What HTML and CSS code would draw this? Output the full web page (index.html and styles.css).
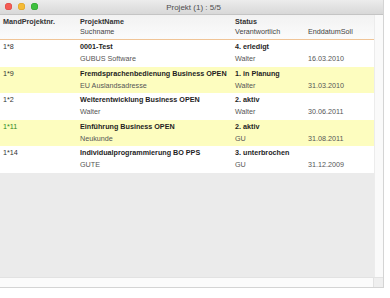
FILE: index.html
```html
<!DOCTYPE html>
<html lang="de">
<head>
    <meta charset="UTF-8">
    <title>Projekt (1) : 5/5</title>
    <link rel="stylesheet" href="styles.css">
</head>
<body>
    <div class="window">
        <div class="titlebar">
            <div class="lights">
                <span class="light red"></span>
                <span class="light yellow"></span>
                <span class="light green"></span>
            </div>
            <div class="title">Projekt (1) : 5/5</div>
        </div>

        <div class="main">
            <div class="table">
                <div class="row head">
                    <div class="cell"><b>MandProjektnr.</b></div>
                    <div class="cell"><b>ProjektName</b><span>Suchname</span></div>
                    <div class="cell"><b>Status</b><span>Verantwortlich</span></div>
                    <div class="cell"><b>&nbsp;</b><span>EnddatumSoll</span></div>
                </div>

                <div class="row">
                    <div class="cell nr">1*8</div>
                    <div class="cell"><b>0001-Test</b><span>GUBUS Software</span></div>
                    <div class="cell"><b>4. erledigt</b><span>Walter</span></div>
                    <div class="cell"><b>&nbsp;</b><span>16.03.2010</span></div>
                </div>
                <div class="row marked">
                    <div class="cell nr">1*9</div>
                    <div class="cell"><b>Fremdsprachenbedienung Business OPEN</b><span>EU Auslandsadresse</span></div>
                    <div class="cell"><b>1. in Planung</b><span>Walter</span></div>
                    <div class="cell"><b>&nbsp;</b><span>31.03.2010</span></div>
                </div>
                <div class="row">
                    <div class="cell nr">1*2</div>
                    <div class="cell"><b>Weiterentwicklung Business OPEN</b><span>Walter</span></div>
                    <div class="cell"><b>2. aktiv</b><span>Walter</span></div>
                    <div class="cell"><b>&nbsp;</b><span>30.06.2011</span></div>
                </div>
                <div class="row marked">
                    <div class="cell nr active">1*11</div>
                    <div class="cell"><b>Einführung Business OPEN</b><span>Neukunde</span></div>
                    <div class="cell"><b>2. aktiv</b><span>GU</span></div>
                    <div class="cell"><b>&nbsp;</b><span>31.08.2011</span></div>
                </div>
                <div class="row">
                    <div class="cell nr">1*14</div>
                    <div class="cell"><b>Individualprogrammierung BO PPS</b><span>GUTE</span></div>
                    <div class="cell"><b>3. unterbrochen</b><span>GU</span></div>
                    <div class="cell"><b>&nbsp;</b><span>31.12.2009</span></div>
                </div>

                <div class="empty"></div>
            </div>
            <div class="vscroll"></div>
        </div>

        <div class="hscroll">
            <div class="track"></div>
            <div class="corner"></div>
        </div>
    </div>
</body>
</html>
```

FILE: styles.css
```css
body {
    margin: 0;
    background-color: white;
    font-family: "Liberation Sans", Arial, sans-serif;
    color: #222;
}
.window {
    width: 383px;
    height: 287px;
    border-right: 1px solid #d4d4d4;
    border-bottom: 1px solid #d4d4d4;
    display: flex;
    flex-direction: column;
    background-color: #fafafa;
}
.titlebar {
    height: 15px;
    flex: none;
    position: relative;
    background: linear-gradient(#ececec, #d8d8d8);
    border-bottom: 1px solid #c4c4c4;
    box-sizing: border-box;
    display: flex;
    align-items: center;
    justify-content: center;
}
.lights {
    position: absolute;
    left: 5px;
    top: 3px;
    display: flex;
    gap: 6px;
}
.light {
    width: 7px;
    height: 7px;
    border-radius: 50%;
}
.red {
    background-color: #f45c55;
    box-shadow: inset 0 0 0 0.5px #d8443e;
}
.yellow {
    background-color: #f5bb35;
    box-shadow: inset 0 0 0 0.5px #d89c22;
}
.green {
    background-color: #3fc03f;
    box-shadow: inset 0 0 0 0.5px #2a9e2a;
}
.title {
    font-size: 8px;
    color: #4d4d4d;
    margin-left: 4px;
}
.main {
    flex: 1;
    display: flex;
    min-height: 0;
}
.table {
    flex: 1;
    display: flex;
    flex-direction: column;
}
.vscroll {
    width: 8px;
    flex: none;
    background-color: #fafafa;
    border-left: 1px solid #ececec;
}
.row {
    display: grid;
    grid-template-columns: 77px 155px 73px 1fr;
    padding: 1px 0 0 3px;
    height: 26.5px;
    box-sizing: border-box;
    background-color: white;
    font-size: 7.2px;
}
.row.marked {
    background-color: #fdfdbf;
}
.cell {
    display: flex;
    flex-direction: column;
    line-height: 12px;
    white-space: nowrap;
}
.cell b {
    color: #1e1e1e;
}
.cell span {
    color: #555;
}
.nr {
    color: #333;
}
.nr.active {
    color: #2e8a22;
}
.row.head {
    padding-top: 2px;
    background: linear-gradient(#f2f2f2, #fbfbfb);
    border-bottom: 1px solid #f0c496;
    height: 25px;
}
.row.head .cell {
    line-height: 10px;
}
.row.head .cell b {
    color: #333;
}
.row.head .cell span {
    color: #444;
}
.empty {
    flex: 1;
    background-color: #ebebeb;
}
.hscroll {
    height: 9px;
    flex: none;
    display: flex;
    border-top: 1px solid #e2e2e2;
}
.track {
    flex: 1;
    background-color: #fbfbfb;
}
.corner {
    width: 9px;
    background-color: #efefef;
    border-left: 1px solid #e2e2e2;
}
```
